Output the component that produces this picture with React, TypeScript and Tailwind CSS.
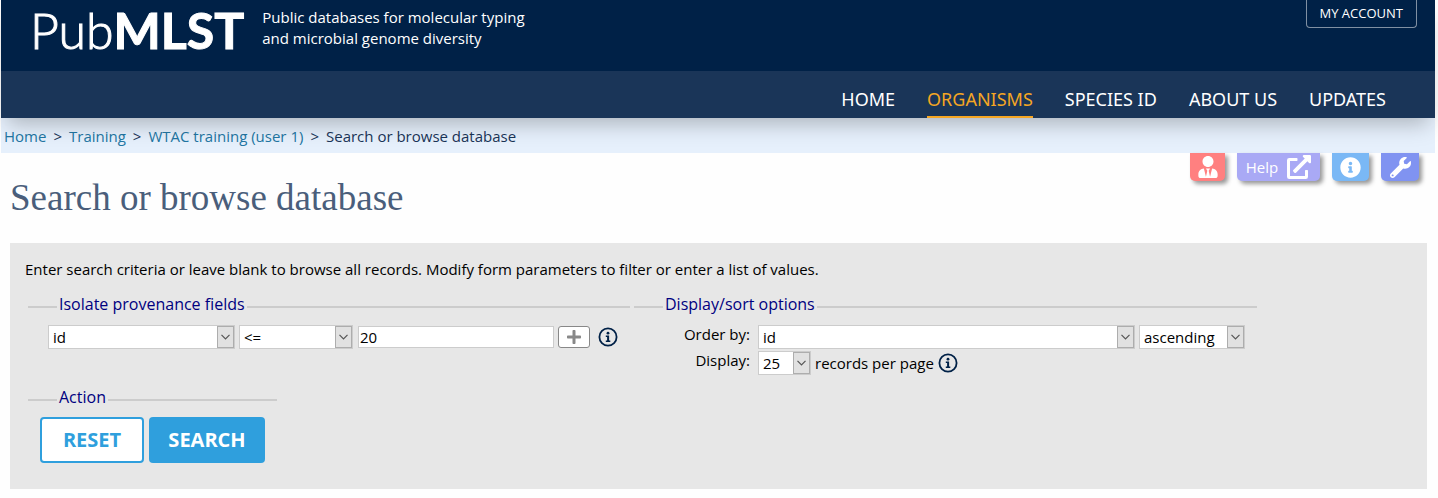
import type { ReactNode } from 'react';
import { FaUserTie, FaExternalLinkAlt, FaInfoCircle, FaWrench, FaPlus } from 'react-icons/fa';

const navItems = ['Home', 'Organisms', 'Species ID', 'About us', 'Updates'];

const toolClass =
  'flex h-7 items-center justify-center rounded-b-[5px] text-white shadow-[3px_3px_4px_#999]';

function InfoIcon() {
  return (
    <svg viewBox="0 0 20 20" className="size-5" aria-hidden="true">
      <circle cx="10" cy="10" r="8.6" fill="none" stroke="#002147" strokeWidth="1.8" />
      <circle cx="10" cy="6.2" r="1.4" fill="#002147" />
      <path d="M7.8 8.5h3.3v5h1.2v1.4H7.8v-1.4h1.3V9.9H7.8z" fill="#002147" />
    </svg>
  );
}

function Select({ label, id, width, options }: { label: string; id: string; width: string; options: string[] }) {
  return (
    <div className={'relative h-6 ' + width}>
      <select
        id={id}
        aria-label={label}
        className="block h-6 w-full appearance-none border border-[#ccc] bg-white pr-5 pl-1 text-[15px] leading-[22px] text-black"
      >
        {options.map((o) => (
          <option key={o}>{o}</option>
        ))}
      </select>
      <span className="pointer-events-none absolute top-px right-px flex h-[22px] w-[17px] items-center justify-center border border-[#adadad] bg-[#e1e1e1]">
        <svg viewBox="0 0 9 6" className="h-[6px] w-[9px]" fill="none" stroke="#555" strokeWidth="1.2">
          <path d="M0.5 0.8 4.5 4.8 8.5 0.8" />
        </svg>
      </span>
    </div>
  );
}

function Section({ title, width, children }: { title: string; width: string; children: ReactNode }) {
  return (
    <fieldset className={'border-t-2 border-[#ccc] ' + width}>
      <legend className="ml-[29px] px-[2px] pb-[6px] text-base leading-5 text-[#000080]">{title}</legend>
      {children}
    </fieldset>
  );
}

export default function App() {
  return (
    <div className="bg-[#fefefe] pr-[3px] pl-px font-['Open_Sans',sans-serif] text-black">
      <header className="relative shadow-[0_12px_20px_-6px_rgba(0,0,0,0.25)]">
        <div className="flex h-[71px] items-start justify-between bg-[#002147] pr-[18px] pl-[29px] text-white">
          <div className="flex items-start gap-5">
            <a href="#" className="font-['Lato',sans-serif] text-[50px] leading-[60px] [-webkit-text-stroke:1px_white]">
              <span className="font-light">Pub</span>
              <span className="font-bold">MLST</span>
            </a>
            <p className="-ml-[2px] pt-[7px] text-[15px] leading-[21px]">
              Public databases for molecular typing
              <br />
              and microbial genome diversity
            </p>
          </div>
          <a href="#" className="flex h-7 items-center rounded-b-[4px] border border-t-0 border-[#8090a3] px-[13px] text-[13px] uppercase">
            My account
          </a>
        </div>
        <nav className="flex h-[47px] items-end justify-end gap-8 bg-[#1a3558] pr-[49px] font-['Noto_Sans',sans-serif] text-lg text-white uppercase">
          {navItems.map((item) => (
            <a
              key={item}
              href="#"
              className={
                item === 'Organisms'
                  ? 'flex h-9 items-center border-b-2 border-[#f5a623] text-[#f5a623]'
                  : 'flex h-9 items-center border-b-2 border-transparent'
              }
            >
              {item}
            </a>
          ))}
        </nav>
      </header>

      <nav aria-label="Breadcrumb" className="flex h-[35px] items-center gap-[7px] bg-[#e6f0fc] px-[3px] pt-[2px] text-[15px] text-[#1a3558]">
        <a href="#" className="text-[#2276a3]">Home</a>
        <span>&gt;</span>
        <a href="#" className="text-[#2276a3]">Training</a>
        <span>&gt;</span>
        <a href="#" className="text-[#2276a3]">WTAC training (user 1)</a>
        <span>&gt;</span>
        <span>Search or browse database</span>
      </nav>

      <main className="pr-2 pb-[9px] pl-[9px]">
        <div className="flex h-[90px] items-start justify-between pr-2">
          <h1 className="pt-[21px] font-['Liberation_Serif',serif] text-[37px] leading-[48px] text-[#4a5e7b]">
            Search or browse database
          </h1>
          <div className="flex gap-3">
            <button type="button" aria-label="User" className={toolClass + ' w-[35px] bg-[#ff8080]'}>
              <FaUserTie className="size-[22px]" />
            </button>
            <button type="button" className={toolClass + ' w-[83px] gap-[9px] bg-[#a9a9f5] text-[15px]'}>
              Help
              <FaExternalLinkAlt className="size-6" />
            </button>
            <button type="button" aria-label="Information" className={toolClass + ' w-[37px] bg-[#7ab8f5]'}>
              <FaInfoCircle className="size-[21px]" />
            </button>
            <button type="button" aria-label="Options" className={toolClass + ' w-[38px] bg-[#8093f1]'}>
              <FaWrench className="size-[21px]" />
            </button>
          </div>
        </div>

        <form className="bg-[#e7e7e7] pt-[15px] pb-[26px] pl-[18px]" onSubmit={(e) => e.preventDefault()}>
          <p className="-ml-[3px] text-[15px] leading-[22px]">
            Enter search criteria or leave blank to browse all records. Modify form parameters to filter or enter a list of values.
          </p>

          <div className="flex gap-1 pt-[14px]">
            <Section title="Isolate provenance fields" width="w-[602px]">
              <div className="flex items-center gap-1 pt-[5px] pl-5">
                <Select id="field" label="Field" width="w-[187px]" options={['id', 'isolate', 'country', 'year']} />
                <Select id="operator" label="Operator" width="w-[114px]" options={['<=', '=', '>=', 'contains']} />
                <input
                  aria-label="Value"
                  defaultValue="20"
                  className="ml-px h-[22px] w-[196px] border border-[#ccc] bg-white px-px text-[15px] leading-5"
                />
                <button
                  type="button"
                  aria-label="Add field"
                  className="flex h-[22px] w-8 items-center justify-center rounded-[3px] border border-[#888] bg-white text-[#888]"
                >
                  <FaPlus className="size-4" />
                </button>
                <a href="#" aria-label="Field help" className="ml-1">
                  <InfoIcon />
                </a>
              </div>
            </Section>

            <Section title="Display/sort options" width="w-[623px]">
              <div className="grid grid-cols-[116px_auto] gap-x-2 gap-y-[2px] pt-[5px] text-[15px] leading-5">
                <label htmlFor="order" className="text-right leading-[18px]">Order by:</label>
                <div className="flex gap-1">
                  <Select id="order" label="Order by" width="w-[377px]" options={['id', 'isolate', 'country', 'year']} />
                  <Select id="direction" label="Direction" width="w-[106px]" options={['ascending', 'descending']} />
                </div>
                <label htmlFor="display" className="text-right leading-[18px]">Display:</label>
                <div className="flex items-center gap-1">
                  <Select id="display" label="Display" width="w-[53px]" options={['25', '50', '100', '200']} />
                  <span>records per page</span>
                  <a href="#" aria-label="Display help">
                    <InfoIcon />
                  </a>
                </div>
              </div>
            </Section>
          </div>

          <div className="pt-3">
            <Section title="Action" width="w-[249px]">
              <div className="flex gap-[5px] pt-1 pl-3 text-xl font-bold">
                <button type="reset" className="h-[46px] w-[104px] rounded-[4px] border-2 border-[#2f9fdd] bg-white text-[#2f9fdd]">
                  RESET
                </button>
                <button type="submit" className="h-[46px] w-[116px] rounded-[4px] bg-[#2f9fdd] text-white">
                  SEARCH
                </button>
              </div>
            </Section>
          </div>
        </form>
      </main>
    </div>
  );
}
